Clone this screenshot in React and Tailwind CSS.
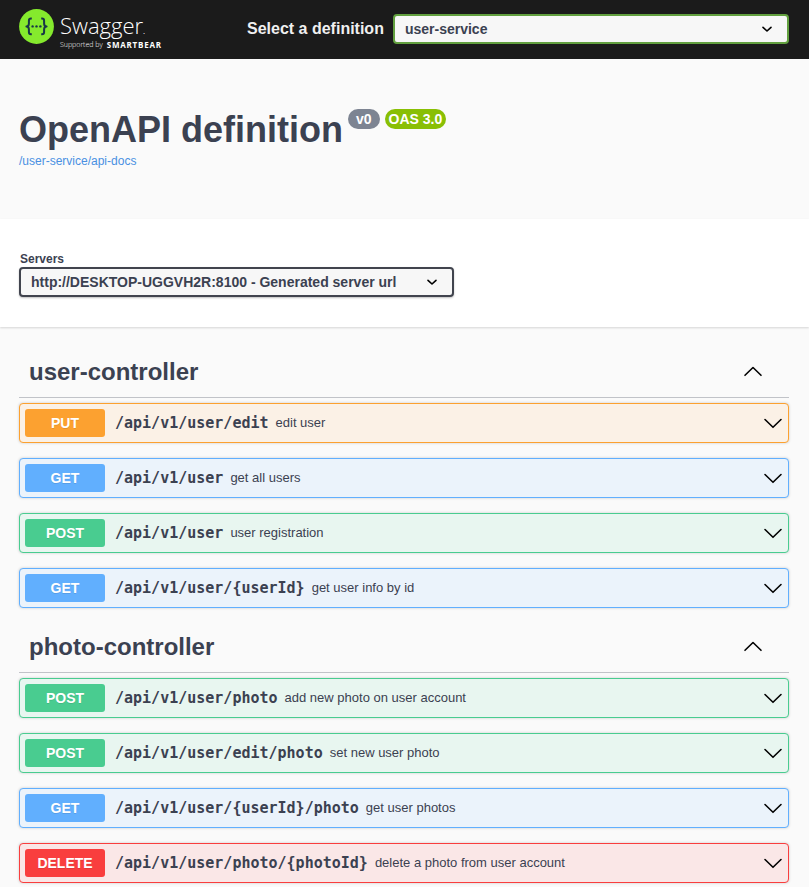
import React from "react";

const METHODS = {
  PUT: { row: "border-[#fca130] bg-[#fbf1e6]", badge: "bg-[#fca130]" },
  GET: { row: "border-[#61affe] bg-[#ebf3fb]", badge: "bg-[#61affe]" },
  POST: { row: "border-[#49cc90] bg-[#e8f6f0]", badge: "bg-[#49cc90]" },
  DELETE: { row: "border-[#f93e3e] bg-[#fae7e7]", badge: "bg-[#f93e3e]" },
};

const SECTIONS = [
  {
    name: "user-controller",
    operations: [
      { method: "PUT", path: "/api/v1/user/edit", summary: "edit user" },
      { method: "GET", path: "/api/v1/user", summary: "get all users" },
      { method: "POST", path: "/api/v1/user", summary: "user registration" },
      { method: "GET", path: "/api/v1/user/{userId}", summary: "get user info by id" },
    ],
  },
  {
    name: "photo-controller",
    operations: [
      { method: "POST", path: "/api/v1/user/photo", summary: "add new photo on user account" },
      { method: "POST", path: "/api/v1/user/edit/photo", summary: "set new user photo" },
      { method: "GET", path: "/api/v1/user/{userId}/photo", summary: "get user photos" },
      { method: "DELETE", path: "/api/v1/user/photo/{photoId}", summary: "delete a photo from user account" },
    ],
  },
];

function Chevron({ up = false }) {
  return (
    <svg
      className="h-5 w-5 shrink-0"
      viewBox="0 0 20 20"
      fill="none"
      stroke="#000"
      strokeWidth="1.6"
      strokeLinecap="round"
      strokeLinejoin="round"
      aria-hidden="true"
    >
      <path d={up ? "M2 13.3 L10 5.5 L18 13.3" : "M2 6.5 L10 14.3 L18 6.5"} />
    </svg>
  );
}

function Select({ id, options, className, wrapperClassName }) {
  return (
    <div className={`relative ${wrapperClassName}`}>
      <select
        id={id}
        className={`block h-[30px] w-full appearance-none rounded border-2 bg-[#f7f7f7] pl-2.5 text-sm font-bold text-[#3b4151] ${className}`}
      >
        {options.map((option) => (
          <option key={option}>{option}</option>
        ))}
      </select>
      <svg
        className="pointer-events-none absolute top-1/2 right-4 h-3 w-3 -translate-y-1/2"
        viewBox="0 0 12 12"
        fill="none"
        stroke="#000"
        strokeWidth="1.6"
        strokeLinecap="round"
        strokeLinejoin="round"
        aria-hidden="true"
      >
        <path d="M2 4.3 L6 8 L10 4.3" />
      </svg>
    </div>
  );
}

function Logo() {
  return (
    <a href="#" className="flex w-[228px] shrink-0 gap-1.5">
      <svg className="h-[35px] w-[35px] shrink-0" viewBox="0 0 35 35" aria-hidden="true">
        <circle cx="17.5" cy="17.5" r="17.4" fill="#85ea2d" />
        <g fill="none" stroke="#173647" strokeWidth="2" strokeLinejoin="round">
          <path d="M12.8 9.6 H12 Q9.9 9.6 9.9 11.8 V14.4 Q9.9 17.4 7.4 17.4 Q9.9 17.4 9.9 20.4 V23 Q9.9 25.2 12 25.2 H12.8" />
          <path d="M22.2 9.6 H23 Q25.1 9.6 25.1 11.8 V14.4 Q25.1 17.4 27.6 17.4 Q25.1 17.4 25.1 20.4 V23 Q25.1 25.2 23 25.2 H22.2" />
        </g>
        <g fill="#173647">
          <circle cx="13.6" cy="17.4" r="1.2" />
          <circle cx="17.5" cy="17.4" r="1.2" />
          <circle cx="21.4" cy="17.4" r="1.2" />
        </g>
      </svg>
      <span className="flex flex-col font-['Open_Sans','Noto_Sans',sans-serif] text-white">
        <span className="flex h-8 items-end">
          <span className="text-[22px] leading-8 font-light">Swagger</span>
          <span className="text-[8px] leading-5">.</span>
        </span>
        <span className="flex items-center gap-1 leading-[8px] whitespace-nowrap">
          <span className="text-[7px] font-light">Supported by</span>
          <span className="text-[8px] font-bold tracking-widest">SMARTBEAR</span>
        </span>
      </span>
    </a>
  );
}

function Operation({ method, path, summary }) {
  const style = METHODS[method];
  return (
    <button
      type="button"
      className={`flex h-10 w-full items-center rounded border px-[5px] text-left shadow-[0_0_3px_rgba(0,0,0,0.19)] ${style.row}`}
    >
      <span
        className={`flex h-7 w-20 shrink-0 items-center justify-center rounded-[3px] text-sm font-bold text-white [text-shadow:0_1px_0_rgba(0,0,0,0.1)] ${style.badge}`}
      >
        {method}
      </span>
      <span className="pl-2.5 font-['DejaVu_Sans_Mono',monospace] text-[15px] font-bold whitespace-nowrap">
        {path}
      </span>
      <span className="min-w-0 flex-1 truncate px-[7px] text-[13px]">{summary}</span>
      <Chevron />
    </button>
  );
}

function Section({ name, operations }) {
  return (
    <section>
      <h2 className="mb-[5px] border-b border-[#c1c3c8]">
        <button
          type="button"
          className="flex h-[49px] w-full items-center justify-between pr-[26px] pb-0.5 pl-2.5 text-2xl font-bold"
        >
          {name}
          <Chevron up />
        </button>
      </h2>
      <div className="flex flex-col gap-[15px] pb-[15px]">
        {operations.map((op) => (
          <Operation key={`${op.method} ${op.path}`} {...op} />
        ))}
      </div>
    </section>
  );
}

export default function App() {
  return (
    <div className="h-screen overflow-hidden bg-[#fafafa] font-['Liberation_Sans',Arial,sans-serif] text-[#3b4151]">
      <header className="flex h-[59px] items-start bg-[#1b1b1b] pt-[9px] pr-5 pl-[19px]">
        <Logo />
        <form className="flex min-w-0 flex-1 items-center gap-[9px] pt-[5px]">
          <label htmlFor="definition" className="text-base font-bold whitespace-nowrap text-[#f0f0f0]">
            Select a definition
          </label>
          <Select
            id="definition"
            options={["user-service"]}
            wrapperClassName="min-w-0 flex-1"
            className="border-[#62a03f]"
          />
        </form>
      </header>

      <div className="h-40 px-[19px] pt-[50px]">
        <div className="flex items-start gap-[5px]">
          <h1 className="text-4xl leading-[41px] font-bold">OpenAPI definition</h1>
          <span className="flex h-5 items-center rounded-full bg-[#7d8492] px-2 text-sm font-bold text-white">
            v0
          </span>
          <span className="flex h-5 items-center rounded-full bg-[#89bf04] px-1 text-sm font-bold text-white">
            OAS 3.0
          </span>
        </div>
        <a href="#" className="block w-fit pt-[3px] text-xs text-[#4990e2]">
          /user-service/api-docs
        </a>
      </div>

      <div className="bg-white px-[19px] pt-8 pb-[30px] shadow-[0_1px_2px_rgba(0,0,0,0.15)]">
        <label htmlFor="server" className="block w-fit pl-px text-xs font-bold">
          Servers
        </label>
        <Select
          id="server"
          options={["http://DESKTOP-UGGVH2R:8100 - Generated server url"]}
          wrapperClassName="w-fit"
          className="border-[#41444e] pr-[55px] shadow-[0_1px_2px_rgba(0,0,0,0.25)]"
        />
      </div>

      <main className="pt-[21px] pr-5 pl-[19px]">
        {SECTIONS.map((section) => (
          <Section key={section.name} {...section} />
        ))}
      </main>
    </div>
  );
}
